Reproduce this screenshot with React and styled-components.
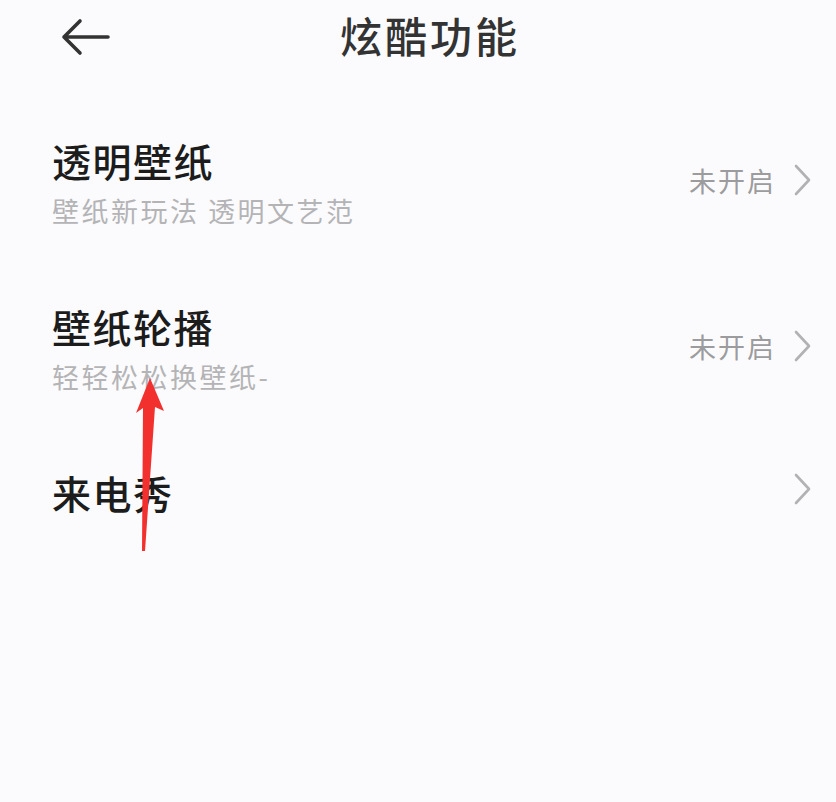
import React from "react"
import styled, { createGlobalStyle } from "styled-components"

const GlobalStyle = createGlobalStyle`
  html, body {
    margin: 0;
    padding: 0;
    background: #fbfbfd;
  }
  body {
    font-family: "Noto Sans CJK SC", "Noto Sans", sans-serif;
  }
`

const Page = styled.div`
  position: relative;
  width: 836px;
  height: 802px;
  background: #fbfbfd;
  overflow: hidden;
`

const Header = styled.header`
  position: relative;
  height: 76px;
  display: flex;
  align-items: center;
  justify-content: center;
`

const BackButton = styled.button`
  position: absolute;
  left: 56px;
  top: 14px;
  width: 58px;
  height: 46px;
  border: 0;
  padding: 0;
  background: none;
  display: flex;
  align-items: center;
  justify-content: center;
`

const Title = styled.h1`
  margin: -8px 0 0 24px;
  font-size: 42px;
  font-weight: 500;
  color: #333;
  letter-spacing: 3px;
`

const List = styled.ul`
  list-style: none;
  margin: 0;
  padding: 26px 0 0;
`

const Row = styled.li`
  display: flex;
  align-items: center;
  padding: 36px 24px 40px 52px;
`

const Texts = styled.div`
  flex: 1;
  display: flex;
  flex-direction: column;
`

const RowTitle = styled.div`
  font-size: 39px;
  line-height: 44px;
  font-weight: 500;
  color: #1c1c1c;
  letter-spacing: 1.5px;
`

const RowSub = styled.div`
  margin-top: 12px;
  font-size: 27px;
  line-height: 34px;
  color: #b4b4b6;
  letter-spacing: 2.5px;
`

const Trailing = styled.div`
  display: flex;
  align-items: center;
  margin-top: ${props => (props.raised ? "-6px" : "0")};
`

const Status = styled.span`
  font-size: 27px;
  color: #9c9c9e;
  letter-spacing: 2px;
  margin-right: 16px;
`

const Arrow = styled.svg`
  position: absolute;
  left: 0;
  top: 0;
  pointer-events: none;
`

const Chevron = () => (
  <svg width="20" height="32" viewBox="0 0 20 32">
    <path d="M4 2 L17 16 L4 30" fill="none" stroke="#b2b2b4" strokeWidth="2.6" strokeLinecap="round" strokeLinejoin="round" />
  </svg>
)

const items = [
  { title: "透明壁纸", sub: "壁纸新玩法 透明文艺范", status: "未开启" },
  { title: "壁纸轮播", sub: "轻轻松松换壁纸-", status: "未开启" },
  { title: "来电秀" },
]

export default function App() {
  return (
    <Page>
      <GlobalStyle />
      <Header>
        <BackButton aria-label="返回">
          <svg width="50" height="40" viewBox="0 0 50 40">
            <path d="M4 20 H48 M20 4 L4 20 L20 36" fill="none" stroke="#333" strokeWidth="3.6" strokeLinecap="round" strokeLinejoin="round" />
          </svg>
        </BackButton>
        <Title>炫酷功能</Title>
      </Header>
      <List>
        {items.map(item => (
          <Row key={item.title}>
            <Texts>
              <RowTitle>{item.title}</RowTitle>
              {item.sub && <RowSub>{item.sub}</RowSub>}
            </Texts>
            <Trailing raised>
              {item.status && <Status>{item.status}</Status>}
              <Chevron />
            </Trailing>
          </Row>
        ))}
      </List>
      <Arrow width="836" height="802" viewBox="0 0 836 802">
        <polygon points="150,378 164,411 155,407 145,551 142,551 143,408 136,413" fill="#f2312f" />
      </Arrow>
    </Page>
  )
}
